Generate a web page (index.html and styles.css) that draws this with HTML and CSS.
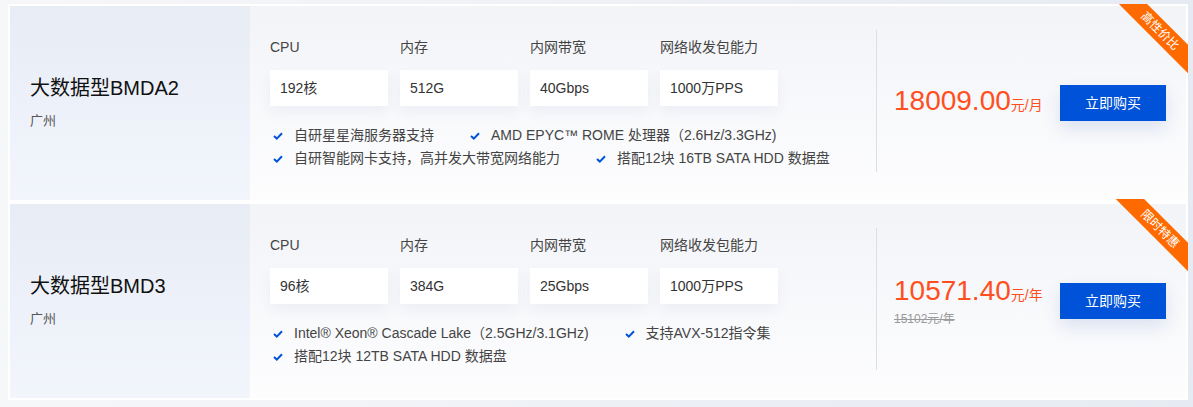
FILE: index.html
```html
<!DOCTYPE html>
<html lang="zh-CN">
<head>
  <meta charset="UTF-8">
  <meta name="viewport" content="width=device-width, initial-scale=1.0">
  <title>大数据型实例</title>
  <link rel="stylesheet" href="styles.css">
</head>
<body>
  <div class="list">
    <div class="card">
      <div class="ribbon"><span>高性价比</span></div>
      <div class="side">
        <h3>大数据型BMDA2</h3>
        <p class="region">广州</p>
      </div>
      <div class="specs">
        <div class="spec-row">
          <div class="spec"><label>CPU</label><div class="val">192核</div></div>
          <div class="spec"><label>内存</label><div class="val">512G</div></div>
          <div class="spec"><label>内网带宽</label><div class="val">40Gbps</div></div>
          <div class="spec"><label>网络收发包能力</label><div class="val">1000万PPS</div></div>
        </div>
        <ul class="features">
          <li><svg viewBox="0 0 10 8"><polyline points="1,4 3.8,6.6 9,1.2"/></svg>自研星星海服务器支持</li>
          <li><svg viewBox="0 0 10 8"><polyline points="1,4 3.8,6.6 9,1.2"/></svg>AMD EPYC™ ROME 处理器（2.6Hz/3.3GHz)</li>
          <li><svg viewBox="0 0 10 8"><polyline points="1,4 3.8,6.6 9,1.2"/></svg>自研智能网卡支持，高并发大带宽网络能力</li>
          <li><svg viewBox="0 0 10 8"><polyline points="1,4 3.8,6.6 9,1.2"/></svg>搭配12块 16TB SATA HDD 数据盘</li>
        </ul>
      </div>
      <div class="buy">
        <div class="price">
          <div class="now"><b>18009.00</b>元/月</div>
        </div>
        <a class="btn" href="#">立即购买</a>
      </div>
    </div>

    <div class="card">
      <div class="ribbon"><span>限时特惠</span></div>
      <div class="side">
        <h3>大数据型BMD3</h3>
        <p class="region">广州</p>
      </div>
      <div class="specs">
        <div class="spec-row">
          <div class="spec"><label>CPU</label><div class="val">96核</div></div>
          <div class="spec"><label>内存</label><div class="val">384G</div></div>
          <div class="spec"><label>内网带宽</label><div class="val">25Gbps</div></div>
          <div class="spec"><label>网络收发包能力</label><div class="val">1000万PPS</div></div>
        </div>
        <ul class="features">
          <li><svg viewBox="0 0 10 8"><polyline points="1,4 3.8,6.6 9,1.2"/></svg>Intel® Xeon® Cascade Lake（2.5GHz/3.1GHz)</li>
          <li><svg viewBox="0 0 10 8"><polyline points="1,4 3.8,6.6 9,1.2"/></svg>支持AVX-512指令集</li>
          <li><svg viewBox="0 0 10 8"><polyline points="1,4 3.8,6.6 9,1.2"/></svg>搭配12块 12TB SATA HDD 数据盘</li>
        </ul>
      </div>
      <div class="buy">
        <div class="price">
          <div class="now"><b>10571.40</b>元/年</div>
          <div class="old">15102元/年</div>
        </div>
        <a class="btn" href="#">立即购买</a>
      </div>
    </div>
  </div>
</body>
</html>
```

FILE: styles.css
```css
body {
  margin: 4px 5px 0 8px;
  min-height: 403px;
  font-family: "Liberation Sans", "Noto Sans CJK SC", sans-serif;
  background: linear-gradient(90deg, #f6f7f9 0%, #e6eaf2 100%);
  color: #333;
}
.list {
  display: flex;
  flex-direction: column;
}
.card {
  position: relative;
  display: flex;
  height: 194px;
  border: 2px solid #fff;
  background: linear-gradient(180deg, #f2f4f8 0%, #fdfdfe 100%);
}
.ribbon {
  position: absolute;
  top: -5px;
  right: -6px;
  width: 76px;
  height: 76px;
  overflow: hidden;
}
.ribbon span {
  position: absolute;
  left: -11px;
  top: 20px;
  width: 110px;
  height: 20px;
  line-height: 20px;
  background: #ff6a00;
  color: #fff;
  font-size: 12px;
  text-align: center;
  transform: rotate(45deg);
}
.side {
  width: 220px;
  padding: 70px 0 0 20px;
  background: linear-gradient(180deg, #e8ecf5 0%, #f2f5fc 100%);
}
.side h3 {
  margin: 0;
  font-size: 20px;
  line-height: 24px;
  font-weight: normal;
  color: #111;
}
.region {
  margin: 12px 0 0;
  font-size: 13px;
  line-height: 18px;
  color: #555;
}
.specs {
  flex: 1;
  padding: 32px 0 0 20px;
}
.spec-row {
  display: flex;
  gap: 12px;
}
.spec {
  width: 118px;
}
.spec label {
  display: block;
  font-size: 14px;
  line-height: 18px;
  color: #444;
}
.val {
  margin-top: 14px;
  height: 36px;
  line-height: 36px;
  padding-left: 10px;
  background: #fff;
  font-size: 14px;
  color: #333;
  box-shadow: 0 6px 14px rgba(30, 60, 130, 0.06);
}
.features {
  display: flex;
  flex-wrap: wrap;
  column-gap: 36px;
  margin: 18px 0 0;
  padding: 0 0 0 3px;
  list-style: none;
}
.features li {
  display: flex;
  align-items: center;
  font-size: 14px;
  line-height: 23px;
  color: #444;
}
.features svg {
  width: 10px;
  height: 8px;
  margin-right: 11px;
  fill: none;
  stroke: #0052d9;
  stroke-width: 2;
}
.buy {
  width: 272px;
  margin: 24px 0 28px;
  padding: 4px 20px 0 17px;
  border-left: 1px solid #dcdfe4;
  display: flex;
  align-items: center;
  justify-content: space-between;
}
.now {
  color: #ff4f1f;
  font-size: 14px;
  line-height: 32px;
}
.now b {
  font-weight: normal;
  font-size: 28px;
}
.old {
  font-size: 12px;
  line-height: 16px;
  color: #999;
  text-decoration: line-through;
}
.btn {
  width: 106px;
  height: 36px;
  line-height: 36px;
  text-align: center;
  background: #0052d9;
  color: #fff;
  font-size: 14px;
  text-decoration: none;
  box-shadow: 0 8px 18px rgba(0, 60, 160, 0.12);
}
```
